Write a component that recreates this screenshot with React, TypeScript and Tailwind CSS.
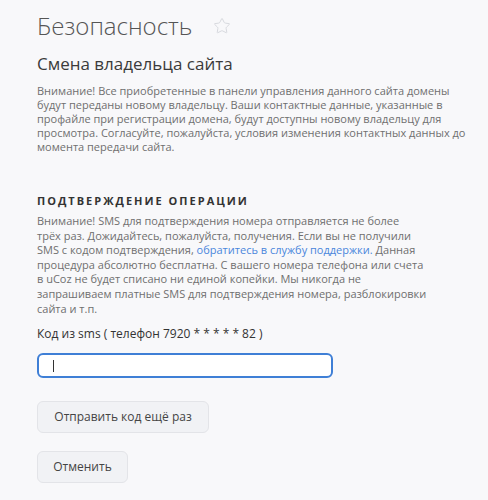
import { Star } from "lucide-react";

export default function App() {
  return (
    <div className="min-h-[500px] w-[488px] bg-[#f8f8fa] px-[37px] font-['Open_Sans',sans-serif]">
      {/* Заголовок страницы */}
      <div className="flex items-center gap-[21px] pt-[10px]">
        <h1 className="text-[24px] leading-[32px] font-light text-[#555]">Безопасность</h1>
        <Star size={18} strokeWidth={1.3} className="text-[#d6d8dd]" />
      </div>

      <h2 className="mt-[11px] text-[17px] leading-[22px] text-[#3b3b3b]">Смена владельца сайта</h2>
      <p className="mt-[9px] whitespace-nowrap text-[11px] leading-[14px] text-[#6f6f6f]">
        Внимание! Все приобретенные в панели управления данного сайта домены
        <br />
        будут переданы новому владельцу. Ваши контактные данные, указанные в
        <br />
        профайле при регистрации домена, будут доступны новому владельцу для
        <br />
        просмотра. Согласуйте, пожалуйста, условия изменения контактных данных до
        <br />
        момента передачи сайта.
      </p>

      {/* Подтверждение */}
      <h3 className="mt-[40px] text-[11px] leading-[14px] font-bold tracking-[2px] text-[#333]">
        ПОДТВЕРЖДЕНИЕ ОПЕРАЦИИ
      </h3>
      <p className="mt-[6px] whitespace-nowrap text-[11px] leading-[14.6px] text-[#6f6f6f]">
        Внимание! SMS для подтверждения номера отправляется не более
        <br />
        трёх раз. Дожидайтесь, пожалуйста, получения. Если вы не получили
        <br />
        SMS с кодом подтверждения,{" "}
        <a href="#" className="text-[#4a86dc]">
          обратитесь в службу поддержки.
        </a>{" "}
        Данная
        <br />
        процедура абсолютно бесплатна. С вашего номера телефона или счета
        <br />
        в uCoz не будет списано ни единой копейки. Мы никогда не
        <br />
        запрашиваем платные SMS для подтверждения номера, разблокировки
        <br />
        сайта и т.п.
      </p>

      <label className="mt-[10px] block text-[12px] leading-[16px] text-[#333]">
        Код из sms ( телефон 7920 * * * * * 82 )
      </label>
      <div className="mt-[11px] flex h-[25px] w-[296px] items-center rounded-[6px] border-2 border-[#3f7fd6] bg-white px-[14px]">
        <span className="h-[12px] w-px bg-[#333]" />
      </div>

      <div className="mt-[23px] flex flex-col items-start gap-[18px]">
        <button className="h-[32px] w-[172px] rounded-[6px] border border-[#e3e4e8] bg-[#f1f2f5] text-[12px] text-[#444]">
          Отправить код ещё раз
        </button>
        <button className="h-[32px] w-[91px] rounded-[6px] border border-[#e3e4e8] bg-[#f1f2f5] text-[12px] text-[#444]">
          Отменить
        </button>
      </div>
    </div>
  );
}
